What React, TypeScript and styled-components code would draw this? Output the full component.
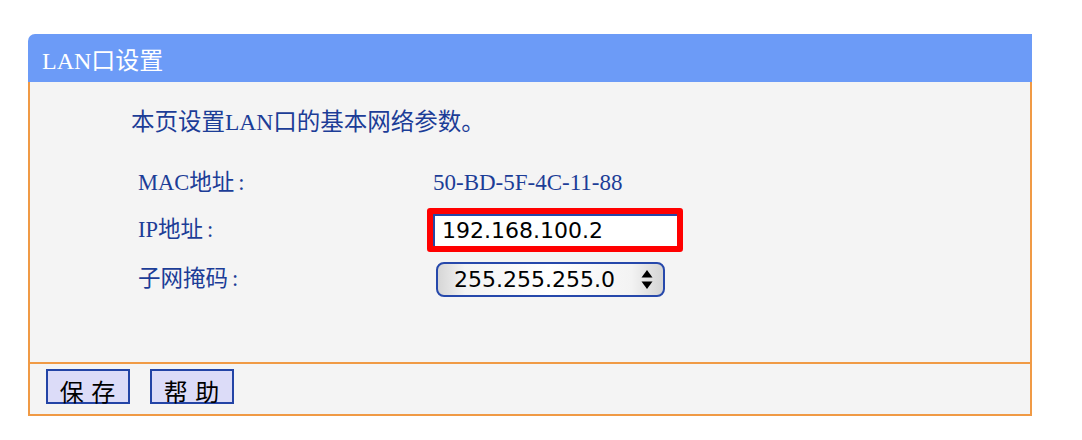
import React from 'react';
import styled, { createGlobalStyle } from 'styled-components';

const ORANGE = '#f09a45';
const BLUE_TEXT = '#1c3d97';
const SERIF = '"Liberation Serif", "Noto Sans CJK SC", serif';
const SANS = '"DejaVu Sans", "Noto Sans CJK SC", sans-serif';

const Global = createGlobalStyle`
  html, body { margin: 0; padding: 0; background: #fff; }
  * { box-sizing: border-box; }
`;

const Page = styled.div`
  padding: 34px 0 0 28px;
`;

const Panel = styled.section`
  width: 1004px;
`;

const Header = styled.h1`
  margin: 0;
  height: 48px;
  padding: 0 0 0 14px;
  display: flex;
  align-items: center;
  background: #6c9bf7;
  color: #fff;
  border-top-left-radius: 7px;
  font: 400 24px ${SERIF};
`;

const Body = styled.div`
  height: 282px;
  border-left: 2px solid ${ORANGE};
  border-right: 2px solid ${ORANGE};
  border-bottom: 2px solid ${ORANGE};
  background: #f4f4f4;
  padding: 25px 0 0 101px;
`;

const Intro = styled.p`
  margin: 0;
  color: ${BLUE_TEXT};
  font: 400 23.5px/30px ${SERIF};
`;

const Form = styled.div`
  margin: 22px 0 0 7px;
  display: grid;
  grid-template-columns: 289px auto;
  grid-template-rows: 48px 46px 52px;
  align-items: center;
`;

const Label = styled.div`
  color: ${BLUE_TEXT};
  font: 400 22.5px/30px ${SERIF};
`;

const Colon = styled.span`
  margin-left: 4px;
`;

const Value = styled.div<{ $offset?: number }>`
  margin-left: ${(p) => p.$offset ?? 0}px;
  color: ${BLUE_TEXT};
  font: 400 23px/30px ${SERIF};
`;

const IpInput = styled.input`
  width: 256px;
  height: 44px;
  border: 6px solid #ff0000;
  border-radius: 3px;
  background: #fff;
  box-shadow: inset 2px 2px 0 #2547a6;
  padding: 1px 0 0 9px;
  color: #000;
  font: 400 22px ${SANS};
  outline: none;
`;

const SelectWrap = styled.div`
  position: relative;
  width: 229px;
  height: 35px;
  margin-left: 9px;
`;

const Select = styled.select`
  appearance: none;
  width: 100%;
  height: 100%;
  border: 2px solid #2648ab;
  border-radius: 8px;
  background: linear-gradient(to right, #d6d6d6 0%, #f3f3f3 12%, #ffffff 50%, #f3f3f3 86%, #d4d4d4 100%);
  padding: 0 0 0 16px;
  color: #000;
  font: 400 22px ${SANS};
  outline: none;
`;

const Arrows = styled.svg`
  position: absolute;
  right: 12px;
  top: 8px;
  pointer-events: none;
`;

const Footer = styled.div`
  height: 52px;
  border-left: 2px solid ${ORANGE};
  border-right: 2px solid ${ORANGE};
  border-bottom: 2px solid ${ORANGE};
  background: #f4f4f4;
  padding: 5px 0 0 16px;
  display: flex;
  align-items: flex-start;
  gap: 20px;
`;

const Button = styled.button`
  width: 84px;
  height: 35px;
  padding: 8px 0 0 0;
  border: 2px solid #2344a6;
  background: #dcdcf8;
  color: #000;
  font: 400 24px/1 "Noto Sans CJK SC", sans-serif;
  letter-spacing: 1px;
  display: flex;
  align-items: center;
  justify-content: center;
`;

export default function App() {
  return (
    <>
      <Global />
      <Page>
        <Panel>
          <Header>LAN口设置</Header>
          <Body>
            <Intro>本页设置LAN口的基本网络参数。</Intro>
            <Form>
              <Label>MAC地址<Colon>:</Colon></Label>
              <Value $offset={6}>50-BD-5F-4C-11-88</Value>
              <Label>IP地址<Colon>:</Colon></Label>
              <Value>
                <IpInput defaultValue="192.168.100.2" />
              </Value>
              <Label>子网掩码<Colon>:</Colon></Label>
              <Value>
                <SelectWrap>
                  <Select defaultValue="255.255.255.0">
                    <option>255.255.255.0</option>
                    <option>255.255.0.0</option>
                    <option>255.0.0.0</option>
                  </Select>
                  <Arrows width="12" height="20" viewBox="0 0 12 20">
                    <path d="M6 0 L11.5 7.5 L0.5 7.5 Z" fill="#000" />
                    <path d="M0.5 11.5 L11.5 11.5 L6 19 Z" fill="#000" />
                  </Arrows>
                </SelectWrap>
              </Value>
            </Form>
          </Body>
          <Footer>
            <Button>保 存</Button>
            <Button>帮 助</Button>
          </Footer>
        </Panel>
      </Page>
    </>
  );
}
